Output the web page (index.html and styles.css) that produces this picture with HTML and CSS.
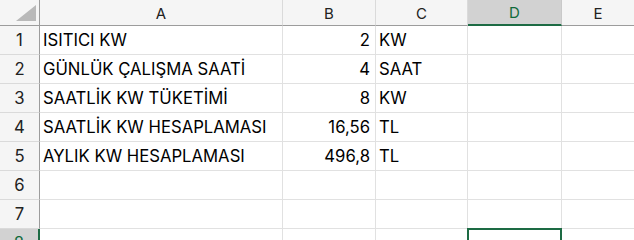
FILE: index.html
```html
<!DOCTYPE html>
<html lang="tr">
<head>
<meta charset="utf-8">
<link rel="stylesheet" href="styles.css">
</head>
<body>
<div class="sheet">
  <div class="hd corner"><span class="tri"></span></div>
  <div class="hd col">A</div>
  <div class="hd col">B</div>
  <div class="hd col">C</div>
  <div class="hd col sel">D</div>
  <div class="hd col last">E</div>

  <div class="hd row">1</div>
  <div class="c">ISITICI KW</div>
  <div class="c num">2</div>
  <div class="c">KW</div>
  <div class="c"></div>
  <div class="c last"></div>

  <div class="hd row">2</div>
  <div class="c">GÜNLÜK ÇALIŞMA SAATİ</div>
  <div class="c num">4</div>
  <div class="c">SAAT</div>
  <div class="c"></div>
  <div class="c last"></div>

  <div class="hd row">3</div>
  <div class="c">SAATLİK KW TÜKETİMİ</div>
  <div class="c num">8</div>
  <div class="c">KW</div>
  <div class="c"></div>
  <div class="c last"></div>

  <div class="hd row">4</div>
  <div class="c">SAATLİK KW HESAPLAMASI</div>
  <div class="c num">16,56</div>
  <div class="c">TL</div>
  <div class="c"></div>
  <div class="c last"></div>

  <div class="hd row">5</div>
  <div class="c">AYLIK KW HESAPLAMASI</div>
  <div class="c num">496,8</div>
  <div class="c">TL</div>
  <div class="c"></div>
  <div class="c last"></div>

  <div class="hd row">6</div>
  <div class="c"></div>
  <div class="c"></div>
  <div class="c"></div>
  <div class="c"></div>
  <div class="c last"></div>

  <div class="hd row">7</div>
  <div class="c"></div>
  <div class="c"></div>
  <div class="c"></div>
  <div class="c"></div>
  <div class="c last"></div>

  <div class="hd row selrow">8</div>
  <div class="c"></div>
  <div class="c"></div>
  <div class="c"></div>
  <div class="c active"></div>
  <div class="c last"></div>
</div>
</body>
</html>
```
FILE: styles.css
```css
html, body {
  margin: 0;
  padding: 0;
  background: #ffffff;
  overflow: hidden;
}
.sheet {
  display: grid;
  grid-template-columns: 40px 243px 93px 92px 94px 1fr;
  grid-template-rows: 26px repeat(8, 29px);
  font-family: Inter, "Open Sans", sans-serif;
  width: 634px;
}
.hd, .c {
  box-sizing: border-box;
  border-right: 1px solid #e1e1e1;
  border-bottom: 1px solid #e1e1e1;
  overflow: hidden;
  white-space: nowrap;
}
.hd {
  background: #f5f5f5;
  color: #222;
  font-size: 15px;
  display: flex;
  align-items: center;
  justify-content: center;
}
.corner {
  position: relative;
  border-right: 1px solid #9c9c9c;
  border-bottom: 1px solid #9c9c9c;
}
.tri {
  position: absolute;
  right: 3px;
  bottom: 4px;
  width: 0;
  height: 0;
  border-left: 20px solid transparent;
  border-bottom: 16px solid #b9b9b9;
}
.col {
  border-bottom: 1px solid #9c9c9c;
  border-right: 1px solid #dadada;
  padding-top: 1px;
}
.col.sel {
  background: #d2d2d2;
  color: #0f6a3a;
  border-bottom: 2px solid #1d6b44;
  border-right-color: #c9c9c9;
}
.row {
  border-right: 1px solid #9c9c9c;
  border-bottom: 1px solid #dadada;
  font-size: 16.7px;
  align-items: flex-end;
  padding-bottom: 4px;
}
.row.selrow {
  background: #d2d2d2;
  color: #0f6a3a;
  border-right: 2px solid #1d6b44;
}
.c {
  font-size: 16.7px;
  color: #000;
  padding: 0 4px 4px 3px;
  display: flex;
  align-items: flex-end;
  line-height: 20px;
}
.c.num {
  justify-content: flex-end;
  padding-right: 5px;
}
.last {
  border-right: none;
}
.c.active {
  border: 2px solid #1d6b44;
  border-bottom: none;
  margin-left: -1px;
  margin-top: -1px;
}
```
